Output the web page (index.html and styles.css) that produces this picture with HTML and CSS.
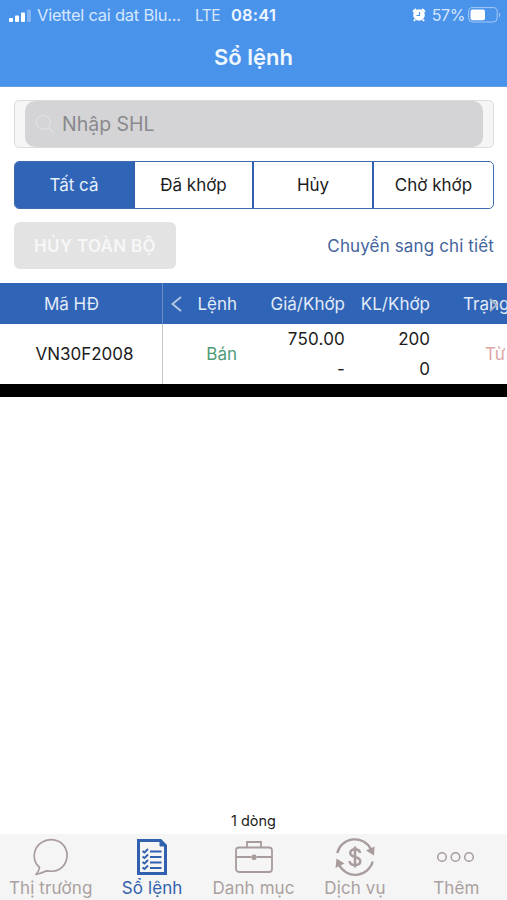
FILE: index.html
```html
<!DOCTYPE html>
<html lang="vi">
<head>
    <meta charset="UTF-8">
    <meta name="viewport" content="width=device-width, initial-scale=1.0">
    <title>Sổ lệnh</title>
    <link rel="stylesheet" href="styles.css">
</head>
<body>
    <!-- Header -->
    <header class="header">
        <div class="status-bar">
            <svg class="signal" width="23" height="13" viewBox="0 0 23 13" fill="#fff">
                <rect x="0" y="9" width="4" height="4" rx="1"/>
                <rect x="6" y="6.5" width="4" height="6.5" rx="1"/>
                <rect x="12" y="3.5" width="4" height="9.5" rx="1"/>
                <rect x="18" y="0.5" width="4" height="12.5" rx="1" opacity="0.3"/>
            </svg>
            <span class="carrier">Viettel cai dat Blu...</span>
            <span class="network">LTE</span>
            <span class="time">08:41</span>
            <svg class="alarm" width="14" height="14" viewBox="0 0 14 14">
                <circle cx="7" cy="7" r="5.8" fill="#fff"/>
                <path d="M1 3.8L4 1M13 3.8L10 1M3 11.5l-1 1.5M11 11.5l1 1.5" stroke="#fff" stroke-width="2"/>
                <path d="M7.5 4V7.5H4.5" fill="none" stroke="#4a93eb" stroke-width="1.1"/>
            </svg>
            <span class="percent">57%</span>
            <svg class="battery" width="33" height="16" viewBox="0 0 33 16">
                <rect x="0.6" y="0.6" width="28.6" height="14.4" rx="4" fill="none" stroke="#fff" stroke-opacity="0.5"/>
                <rect x="2.5" y="2.6" width="14.5" height="10.6" rx="2" fill="#fff"/>
                <path d="M31 5.5c1.6.8 1.6 4 0 4.8z" fill="#fff" opacity="0.5"/>
            </svg>
        </div>
        <h1>Sổ lệnh</h1>
    </header>

    <!-- Filters -->
    <section class="filters">
        <div class="search-box">
            <div class="search-field">
                <svg width="20" height="20" viewBox="0 0 20 20" fill="none" stroke="#dedee0" stroke-width="1.6">
                    <circle cx="8.3" cy="8.3" r="7"/>
                    <path d="M13.4 13.4L19 19"/>
                </svg>
                <span>Nhập SHL</span>
            </div>
        </div>
        <div class="segments">
            <div class="segment active">Tất cả</div>
            <div class="segment">Đã khớp</div>
            <div class="segment">Hủy</div>
            <div class="segment">Chờ khớp</div>
        </div>
        <div class="actions">
            <button class="cancel-button" disabled>HỦY TOÀN BỘ</button>
            <a class="detail-link">Chuyển sang chi tiết</a>
        </div>
    </section>

    <!-- Orders -->
    <section class="orders">
        <div class="row head">
            <div class="code">Mã HĐ</div>
            <div class="side">
                <svg width="11" height="16" viewBox="0 0 11 16" fill="none" stroke="#b9c8e2" stroke-width="1.8">
                    <path d="M10 1L1.5 8L10 15"/>
                </svg>
                <span>Lệnh</span>
            </div>
            <div class="price">Giá/Khớp</div>
            <div class="volume">KL/Khớp</div>
            <div class="state">
                Trạng
                <svg class="next" width="9" height="14" viewBox="0 0 9 14" fill="none" stroke="#aab5c8" stroke-width="1.8">
                    <path d="M1 1L7.5 7L1 13"/>
                </svg>
            </div>
        </div>
        <div class="row order">
            <div class="code">VN30F2008</div>
            <div class="side sell">Bán</div>
            <div class="price"><span>750.00</span><span>-</span></div>
            <div class="volume"><span>200</span><span>0</span></div>
            <div class="state rejected">Từ</div>
        </div>
    </section>

    <div class="count">1 dòng</div>

    <!-- Tab bar -->
    <nav class="tab-bar">
        <div class="tab">
            <svg width="40" height="40" viewBox="0 0 40 40" fill="none" stroke="#a89c9c" stroke-width="1.7" stroke-linejoin="round">
                <path d="M8.500 30.500C0.500 23.500 2 11 10.500 5.500C18 0.500 28.500 2 33.500 9.500C38.500 17.500 36 28 28 32.500C24 34.800 19.500 34.500 15.500 33.800C12.500 35.500 9 36.500 5 37.500C7 35 8.200 33 8.500 30.500Z"/>
            </svg>
            <span>Thị trường</span>
        </div>
        <div class="tab active">
            <svg width="40" height="40" viewBox="0 0 40 40" fill="none" stroke="#3161ae">
                <path d="M6.500 3.500H28.500L33.500 8.500V36.500H6.500Z" stroke-width="3"/>
                <path d="M28 3V9H34Z" fill="#3161ae"/>
                <path d="M18 14.500H29.500M18 20H29.500M18 25.500H29.500M18 31H29.500" stroke-width="1.900"/>
                <path d="M10.500 14l2 1.500l3.500-3.500M10.500 19.500l2 1.500l3.500-3.500M10.500 25l2 1.500l3.500-3.500M10.500 30.500l2 1.500l3.500-3.500" stroke-width="1.900"/>
            </svg>
            <span>Sổ lệnh</span>
        </div>
        <div class="tab">
            <svg width="40" height="40" viewBox="0 0 40 40" fill="none" stroke="#a89c9c" stroke-width="1.8">
                <rect x="2" y="10.500" width="36" height="24.500" rx="3"/>
                <path d="M13 10.500V5H27V10.500M2 20H17.500M22.500 20H38"/>
                <rect x="17.500" y="17.500" width="5" height="5.500" rx="2" fill="#a89c9c" stroke="none"/>
            </svg>
            <span>Danh mục</span>
        </div>
        <div class="tab">
            <svg width="40" height="40" viewBox="0 0 40 40" fill="none" stroke="#a89c9c" stroke-width="2.300">
                <path d="M2.300 16A18 18 0 0 1 36 12.500M37.700 24.500A18 18 0 0 1 4 27.500"/>
                <path d="M31 13.500L39.500 9.500L39 18.500ZM9.500 26.500L0.500 31L1.500 21.500Z" fill="#a89c9c" stroke="none"/>
                <path d="M25 16C24.500 11 15.200 11 15.200 16C15.200 21 25.300 18.800 25.300 24.300C25.300 29.500 15 29.500 14.500 24M20 9.500V30.500" stroke-width="2.500"/>
            </svg>
            <span>Dịch vụ</span>
        </div>
        <div class="tab">
            <svg width="40" height="40" viewBox="0 0 40 40" fill="none" stroke="#a89c9c" stroke-width="1.500">
                <circle cx="6" cy="20" r="4.300"/>
                <circle cx="19.500" cy="20" r="4.300"/>
                <circle cx="33" cy="20" r="4.300"/>
            </svg>
            <span>Thêm</span>
        </div>
    </nav>
</body>
</html>
```
FILE: styles.css
```css
* {
    box-sizing: border-box;
}
body {
    display: flex;
    flex-direction: column;
    height: 100vh;
    margin: 0;
    overflow: hidden;
    font-family: Inter, "Liberation Sans", sans-serif;
    font-size: 17px;
    color: #1c1c1c;
    background-color: #fff;
}
.header {
    height: 87px;
    flex: none;
    background-color: #4a93eb;
    color: #eef6ff;
    border-bottom: 1px solid #6b9fdc;
}
.status-bar {
    display: flex;
    align-items: center;
    height: 30px;
    padding: 0 6px 0 9px;
    white-space: nowrap;
}
.carrier {
    flex: none;
    width: 163px;
    padding-left: 5px;
    font-size: 16.5px;
    letter-spacing: -0.25px;
    color: #d5e7fd;
}
.network {
    flex: none;
    width: 36px;
    font-size: 15.5px;
    letter-spacing: -0.5px;
    color: #d5e7fd;
}
.time {
    font-size: 16.5px;
    font-weight: 600;
    letter-spacing: 0.2px;
}
.alarm {
    margin-left: auto;
}
.percent {
    margin: 0 3px 0 6px;
    font-size: 16px;
    letter-spacing: -0.4px;
    color: #d5e7fd;
}
h1 {
    margin: 0;
    line-height: 54px;
    font-size: 22px;
    font-weight: 600;
    text-align: center;
}
.filters {
    display: flex;
    flex-direction: column;
    gap: 13px;
    padding: 13px 13px 14px 14px;
}
.search-box {
    height: 48px;
    padding: 0 10px;
    border: 1px solid #dcdcdc;
    border-radius: 5px;
    background-color: #f5f5f5;
}
.search-field {
    display: flex;
    align-items: center;
    gap: 7px;
    height: 46px;
    padding-left: 10px;
    border-radius: 10px;
    font-size: 19.5px;
    color: #89898d;
    background-color: #d4d4d6;
}
.segments {
    display: grid;
    grid-template-columns: 120px 119px 120px 1fr;
    height: 48px;
    border: 1px solid #3f6cae;
    border-radius: 5px;
    overflow: hidden;
}
.segment {
    line-height: 46px;
    text-align: center;
    border-right: 2px solid #3161ae;
}
.segment:last-child {
    border-right: none;
}
.segment.active {
    color: #e6effc;
    background-color: #3064b6;
}
.actions {
    display: flex;
    justify-content: space-between;
    align-items: center;
}
.cancel-button {
    width: 162px;
    height: 47px;
    padding: 0;
    border: none;
    border-radius: 6px;
    font-family: inherit;
    font-size: 17px;
    font-weight: 600;
    letter-spacing: 0.3px;
    color: #f7f7f7;
    background-color: #e3e3e3;
}
.detail-link {
    letter-spacing: 0.13px;
    color: #44649c;
}
.orders {
    overflow: hidden;
    border-bottom: 13px solid #000;
}
.row {
    display: grid;
    grid-template-columns: 163px 74px 108px 85px 77px;
    align-items: center;
    height: 60px;
    text-align: right;
    white-space: nowrap;
}
.head {
    height: 41px;
    color: #e2ebf8;
    background-color: #3064b6;
}
.code {
    height: 100%;
    display: flex;
    align-items: center;
    justify-content: center;
    padding-left: 7px;
    border-right: 1px solid #c4c4c4;
}
.head .code {
    padding: 0 19px 0 0;
    border-color: #6c8cc4;
}
.head .side {
    display: flex;
    align-items: center;
    justify-content: space-between;
    padding-left: 8px;
}
.order .price, .order .volume {
    display: flex;
    flex-direction: column;
    line-height: 30px;
}
.order .price {
    letter-spacing: 0.2px;
}
.sell {
    color: #4e9b78;
}
.state {
    position: relative;
    padding-left: 33px;
    text-align: left;
}
.next {
    position: absolute;
    left: 59px;
    top: 4px;
}
.rejected {
    padding-left: 55px;
    color: #dda5a5;
}
.count {
    margin-top: auto;
    line-height: 26px;
    font-size: 14.5px;
    text-align: center;
}
.tab-bar {
    display: flex;
    flex: none;
    height: 66px;
    background-color: #f5f5f5;
}
.tab {
    flex: 1;
    display: flex;
    flex-direction: column;
    align-items: center;
    padding-top: 3px;
    line-height: 23px;
    letter-spacing: 0.1px;
    color: #aaa0a0;
    white-space: nowrap;
}
.tab svg {
    flex: none;
}
.tab.active {
    color: #3161ae;
}
```
